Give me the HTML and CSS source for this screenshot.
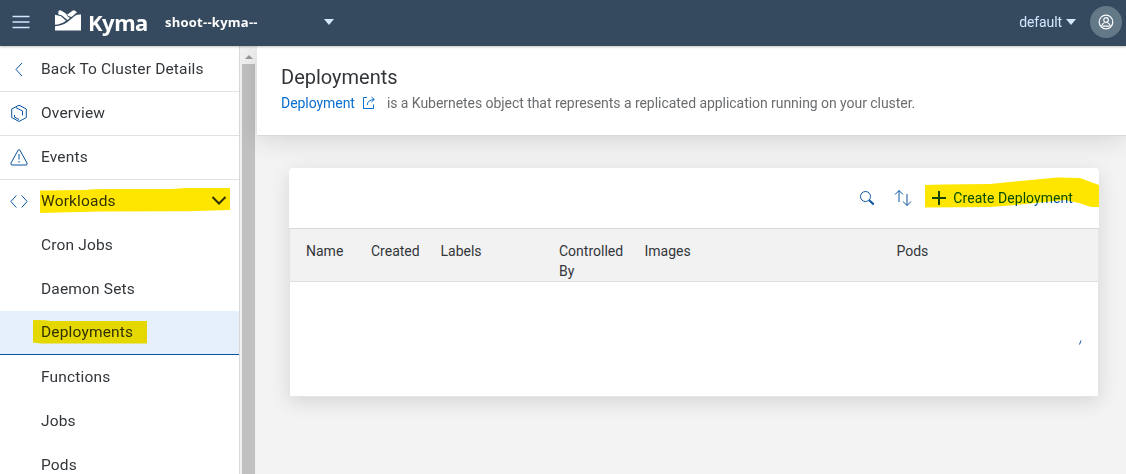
FILE: index.html
```html
<!DOCTYPE html>
<html lang="en">
<head>
<meta charset="utf-8">
<title>Deployments</title>
<link rel="stylesheet" href="styles.css">
</head>
<body>
<header class="shell">
  <svg class="menu" width="18" height="14" viewBox="0 0 18 14"><path d="M.5 1.500h17M.5 7h17M.5 12.500h17" stroke="#d1e8ff" stroke-width="1.600"/></svg>
  <svg class="logo" width="26" height="21" viewBox="0 0 26 21" fill="#fff"><path d="M0 4.800 L6 6.300 L11 10.800 Q6 14.500 0 14.800Z"/><path d="M3.500 1 Q4.500 -.3 6 .5 L9.300 2.500 Q11.500 3.700 12 5.300 Q12.500 7 15 8.100 L12.400 10 L7 5.500 L3.200 4.300Z"/><path d="M12 4.800 L17.500 .7 Q19 0 20 .7 L22 2.300 L16.600 7 Q13.500 6.700 12 4.800Z"/><path d="M26 4.500V20.500H0V16.200Q7 16 12.500 12L20 5.700Q22.300 4.300 26 4.500Z"/></svg>
  <span class="brand">Kyma</span>
  <button class="cluster"><span>shoot--kyma--</span><i class="caret"></i></button>
  <button class="namespace"><span>default</span><i class="caret"></i></button>
  <span class="avatar"><svg width="16" height="16" viewBox="0 0 16 16" fill="none" stroke="#fff" stroke-width="1.200"><circle cx="8" cy="8" r="6.800"/><circle cx="8" cy="6" r="2.300"/><path d="M4 12.800V11.500Q4.500 9.500 6.500 8.800M12 12.800V11.500Q11.500 9.500 9.500 8.800M5 12.200H11"/></svg></span>
</header>
<div class="layout">
  <nav class="sidebar">
    <a class="item ruled"><svg class="icon" viewBox="0 0 18 18"><path d="M12 3 6 9.500 12 16"/></svg><span>Back To Cluster Details</span></a>
    <a class="item ruled"><svg class="icon" viewBox="0 0 18 18"><path d="M9 1.200 16.300 5V13.500L9 17.500 1.700 13.500V5Z M5.800 3.500 12.500 7V11.500M4.500 11V13.200L9 15.500"/></svg><span>Overview</span></a>
    <a class="item ruled"><svg class="icon" viewBox="0 0 18 18"><path d="M8.200 2Q9 1 9.800 2L17 15Q17.700 16.700 16 17H2Q.3 16.700 1 15ZM9 6V11.500M9 13V14.600"/></svg><span>Events</span></a>
    <a class="item"><svg class="icon" viewBox="0 0 18 18"><path d="M6.300 3.500.9 9.500 6.300 15.500M11.700 3.500 17.100 9.500 11.700 15.500"/></svg><span>Workloads</span><svg class="chevron" width="16" height="12" viewBox="0 0 16 12"><path d="M1.500 2 8 8.500 14.500 2"/></svg>
      <svg class="mark mark-group" width="190" height="26" viewBox="0 0 190 26"><path d="M0 2.500 45 2Q55 .8 75 1L132 1 145 0H190V22L148 23.200 60 23.600 0 25Z"/></svg></a>
    <a class="item sub"><span>Cron Jobs</span></a>
    <a class="item sub"><span>Daemon Sets</span></a>
    <a class="item sub selected"><span>Deployments</span><svg class="mark mark-item" width="114" height="24" viewBox="0 0 114 24"><path d="M0 0 12 .2 18 1H114V23.500H8L0 22.500Z"/></svg></a>
    <a class="item sub"><span>Functions</span></a>
    <a class="item sub"><span>Jobs</span></a>
    <a class="item sub"><span>Pods</span></a>
  </nav>
  <div class="scrollbar"><i class="up"></i><div class="thumb"></div></div>
  <main class="content">
    <section class="page-head">
      <h1>Deployments</h1>
      <p><a class="link">Deployment</a><svg class="external" width="14" height="14" viewBox="0 0 14 14"><path d="M5 1.500H1.500V12.500H11.500V8.500M5.300 9Q5.500 4 12 3.500M9.500 1 12.300 3.500 9.500 6"/></svg><span>is a Kubernetes object that represents a replicated application running on your cluster.</span></p>
    </section>
    <section class="card">
      <div class="toolbar">
        <svg width="16" height="16" viewBox="0 0 16 16"><circle cx="6.500" cy="6.500" r="5"/><path d="M10.200 10.200 14.700 14.500" stroke-width="2"/></svg>
        <svg class="sort" width="18" height="18" viewBox="0 0 18 18"><path d="M5 13V1.500M1 5.500 5 1.500 9 5.500M13 5V16.500M9 12.500 13 16.500 17 12.500"/></svg>
        <svg class="plus" width="14" height="14" viewBox="0 0 14 14"><path d="M7 0V14M0 7H14"/></svg>
        <span class="create">Create Deployment</span>
        <svg class="mark mark-create" width="174" height="31" viewBox="0 0 174 31"><path d="M0 8 18 7.500 65 7 95 4 132 .5 155 1 174 8V30H166L154 26 140 23 115 25.500 85 28.500 65 30 0 30.500Z"/></svg>
      </div>
      <div class="table">
        <div class="columns"><span>Name</span><span>Created</span><span>Labels</span><span>Controlled<br>By</span><span>Images</span><span>Pods</span></div>
        <div class="rows"><svg class="fragment" width="3" height="5" viewBox="0 0 3 5"><path d="M.5 4.500 2 .5"/></svg></div>
      </div>
    </section>
  </main>
</div>
</body>
</html>
```
FILE: styles.css
```css
* { box-sizing: border-box; }
body { margin: 0; width: 1126px; height: 474px; overflow: hidden; background: #f3f3f3; color: #32363a; font-family: Roboto, "Noto Sans", sans-serif; }
button { border: 0; padding: 0; background: none; font: inherit; }
svg { flex: none; fill: none; }
.shell { position: relative; z-index: 2; display: flex; align-items: center; height: 46px; padding: 0 4px 2px 12px; background: #354a5f; box-shadow: 0 1px 2px rgba(0,0,0,.25); }
.logo { margin-left: 25px; margin-top: -3px; fill: #fff; }
.brand { margin-left: 7px; width: 77px; color: #fff; font: 700 22px/30px "Noto Sans", sans-serif; letter-spacing: -.5px; }
.cluster { display: flex; align-items: center; justify-content: space-between; width: 169px; color: #fff; font: 700 13px/20px "Open Sans", sans-serif; letter-spacing: .25px; }
.caret { border: 5px solid transparent; border-top: 6px solid #d1e8ff; border-bottom: 0; }
.namespace { display: flex; align-items: center; gap: 4px; margin-left: auto; margin-top: -1px; color: #d1e8ff; font-size: 14px; letter-spacing: -.1px; }
.avatar { display: flex; align-items: center; justify-content: center; width: 32px; height: 32px; margin-left: 14px; border-radius: 50%; background: #647987; }
.layout { display: flex; height: 428px; }
.sidebar { width: 240px; padding-top: 2px; background: #fff; border-right: 1px solid #d9d9d9; }
.item { position: relative; display: flex; align-items: center; height: 44px; padding: 0 12px 1px 10px; font-size: 15.5px; letter-spacing: .16px; }
.ruled { border-bottom: 1px solid #e2e2e2; }
.icon { width: 18px; height: 18px; margin-right: 13px; stroke: #0854a0; stroke-width: 1; }
.item:nth-child(n+4) { top: -1px; }
.chevron { margin-left: auto; stroke: #32363a; stroke-width: 2; }
.sub { padding-left: 41px; }
.selected { background: #e5f0fa; border-bottom: 1px solid #0854a0; }
.mark { position: absolute; fill: #ffe600; mix-blend-mode: multiply; pointer-events: none; }
.mark-group { left: 40px; top: 9px; }
.mark-item { left: 33px; top: 9px; }
.scrollbar { width: 17px; padding: 9px 2px 0; background: #f1f1f1; display: flex; flex-direction: column; align-items: center; }
.up { border: 4px solid transparent; border-top: 0; border-bottom: 4px solid #999; }
.thumb { width: 13px; flex: 1; margin-top: 5px; background: #c1c1c1; }
.content { flex: 1; }
.page-head { height: 89px; padding: 18px 24px 0; background: #fff; box-shadow: 0 1px 0 #d9d9d9, 0 4px 24px rgba(0,0,0,.13); }
h1 { margin: 0; font-size: 20px; line-height: 26px; font-weight: 400; }
p { display: flex; align-items: center; height: 26px; margin: 0; color: #6a6d70; font-size: 14px; letter-spacing: -.05px; white-space: nowrap; }
.link { color: #0a6ed1; }
.external { margin: 0 11px 0 7px; stroke: #0a6ed1; }
.card { position: relative; width: 810px; height: 229px; margin: 33px 0 0 32px; display: flex; flex-direction: column; background: #fff; border-radius: 4px 4px 0 0; box-shadow: 0 5px 20px rgba(0,0,0,.12); }
.toolbar { position: relative; display: flex; align-items: center; justify-content: flex-end; height: 61px; padding: 0 26px 1px 0; border-bottom: 1px solid #d9d9d9; stroke: #0854a0; }
.toolbar > svg { stroke-width: 1; }
.toolbar .sort { margin-left: 19px; }
.toolbar .plus { margin: 0 7px 0 20px; stroke: #174b64; stroke-width: 2; }
.create { color: #0854a0; font-size: 14px; letter-spacing: .06px; }
.toolbar .mark-create { left: 636px; top: 9px; stroke: none; }
.table { flex: 1; display: flex; flex-direction: column; border: 1px solid #e5e5e5; border-top: 0; }
.columns { display: grid; grid-template-columns: 65px 69.500px 118.500px 85.500px 252px 1fr; height: 53px; padding: 12px 0 0 16px; background: #f2f2f2; border-bottom: 1px solid #e0e0e0; font-size: 14px; line-height: 20px; }
.rows { position: relative; flex: 1; }
.fragment { position: absolute; left: 789px; top: 58px; stroke: #0854a0; }
```
